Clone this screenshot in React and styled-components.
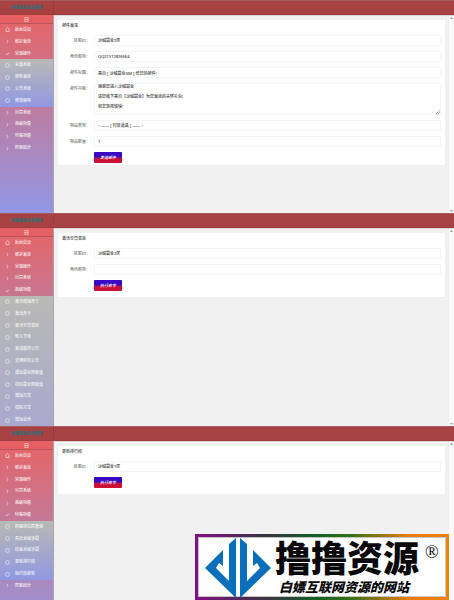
import React, { useEffect, useId, useRef } from "react";
import styled, { createGlobalStyle } from "styled-components";

const Global = createGlobalStyle`
  * { box-sizing: border-box; }
  body {
    margin: 0;
    background: #f1f1f1;
    font-family: "Noto Sans", "Noto Sans CJK SC", sans-serif;
    font-size: 4px;
    line-height: 8px;
  }
  button, input, select, textarea { font: inherit; }
`;

const Page = styled.div`
  position: relative;
  height: 100vh;
  overflow: hidden;
`;

const Screen = styled.section`
  height: 213px;
  display: grid;
  grid-template: 15px minmax(0, 1fr) / 54px minmax(0, 1fr);
  overflow: hidden;
`;

const Header = styled.header`
  grid-column: 1 / -1;
  display: grid;
  grid-template-columns: 54px 1fr;
  background: #a84242;
  border-top: 1px solid #a85d5d;
  border-bottom: 1px solid #9b3d3d;
`;

const Brand = styled.h1`
  margin: 0;
  display: flex;
  align-items: center;
  justify-content: center;
  border-right: 1px solid #94393c;
  color: #2c7076;
  font-size: 4px;
  font-weight: 900;
`;

const Sidebar = styled.aside`
  display: grid;
  grid-template-rows: 9px minmax(0, 1fr);
  border-right: 1px solid #aaa3ad;
  background: linear-gradient(#e66465, #9198e5);
  min-height: 0;
`;

const Collapse = styled.button`
  display: flex;
  align-items: center;
  justify-content: center;
  padding: 0;
  border: 0;
  border-bottom: 1px solid #b5565c;
  background: #e66063;
  color: #f4c8c8;
`;

const Menu = styled.nav`
  height: 100%;
  min-height: 0;
  display: flex;
  flex-direction: column;
`;

const Group = styled.div`
  flex: 0 0 calc(100% * ${(p) => p.$rows} / 16);
  display: grid;
  grid-auto-rows: minmax(0, 1fr);
  background: ${(p) => (p.$sub ? `linear-gradient(#b9b9b5, ${p.$end})` : "transparent")};
`;

const MenuLink = styled.a`
  display: grid;
  grid-template-columns: 5px 1fr;
  column-gap: 5px;
  align-items: center;
  padding-left: 5px;
  color: #fff;
  font-weight: 500;
  text-decoration: none;
  white-space: nowrap;
  opacity: 0.9;
`;

const Main = styled.main`
  display: grid;
  grid-template-columns: minmax(0, 1fr) 5px;
  column-gap: 4px;
  padding-left: 4px;
  background: #f1f1f1;
  border-top: 1px solid #ddd9d9;
`;

const ScrollTrack = styled.div`
  display: flex;
  flex-direction: column;
  justify-content: space-between;
  align-items: center;
  padding: 1px 0;
  background: #fafafa;
  color: #999;
`;

const Card = styled.form`
  align-self: start;
  margin-top: 4px;
  padding: 2px 4px ${(p) => (p.$tight ? 2 : 6)}px;
  background: #fff;
  border-radius: 1px;
`;

const Title = styled.h2`
  margin: 0 0 5px;
  font-size: 4px;
  line-height: 8px;
  font-weight: 500;
  color: #333;
`;

const Fields = styled.div`
  display: grid;
  row-gap: 5px;
`;

const Field = styled.div`
  display: grid;
  grid-template-columns: 28px minmax(0, 1fr);
  column-gap: 4px;
`;

const Label = styled.label`
  line-height: 11px;
  text-align: right;
  white-space: nowrap;
  color: #555;
`;

const boxStyle = `
  display: block;
  width: 100%;
  height: 11px;
  margin: 0;
  padding: 0 3px;
  border: 1px solid #f5f5f5;
  border-radius: 1px;
  outline: 0;
  background: #fff;
  color: #333;
  font-weight: 500;
`;

const TextBox = styled.input`${boxStyle}`;
const Choice = styled.select`
  ${boxStyle}
  appearance: none;
`;
const Message = styled.textarea`
  ${boxStyle}
  height: 32px;
  line-height: 10px;
  resize: none;
  scrollbar-width: none;
`;
const MessageWrap = styled.div`
  position: relative;
`;
const Grip = styled.svg`
  position: absolute;
  right: 1px;
  bottom: 1px;
`;

const Submit = styled.button`
  justify-self: start;
  width: 28px;
  height: 11px;
  margin-left: 32px;
  padding: 0;
  border: 0;
  border-radius: 1px;
  background: linear-gradient(#3908c4 42%, #cb1035 62%);
  color: #fff;
  font-weight: 500;
  font-style: italic;
`;

const Banner = styled.aside`
  position: absolute;
  right: 5px;
  bottom: 0;
  width: 254px;
  height: 66px;
  padding: 3px;
  background: linear-gradient(90deg, #821087, #393442 28%, #126024 48%, #39711a 62%, #e97c0b 84%, #f18100);
`;

const BannerBody = styled.div`
  height: 100%;
  display: grid;
  grid-template-columns: 66px 146px 1fr;
  column-gap: 4px;
  padding-left: 6px;
  border: 1px solid #c9c5c2;
  background: #fff;
  color: #080808;
`;

const BannerText = styled.div`
  padding-top: 2px;
  white-space: nowrap;
  font-family: "Liberation Sans", "Noto Sans CJK SC", sans-serif;
  font-weight: 900;
`;

const BannerName = styled.strong`
  display: block;
  font-size: 36px;
  line-height: 40px;
  font-weight: 900;
`;

const Slogan = styled.span`
  display: block;
  padding-left: 4px;
  font-size: 13px;
  line-height: 15px;
  font-style: italic;
`;

const Registered = styled.span`
  padding-top: 4px;
  font-family: "Liberation Serif", serif;
  font-size: 18px;
  line-height: 20px;
`;

function MenuIcon({ kind }) {
  const paths = {
    home: "M.5 2.5 2.5.5 4.5 2.5M1 2.5V4.5H4V2.5",
    closed: "M1.5 1 3.2 2.5 1.5 4",
    open: "M.8 3 2 3.6 4.2 1.8",
  };
  return (
    <svg width="5" height="5" viewBox="0 0 5 5" fill="none" stroke="#fff" strokeWidth=".6">
      {kind === "item" ? <circle cx="2.5" cy="2.5" r="1.9" /> : <path d={paths[kind]} />}
    </svg>
  );
}

function MenuGroup({ items, sub, end = "#9198e2", open }) {
  return (
    <Group $rows={items.length} $sub={sub} $end={end}>
      {items.map((name) => (
        <MenuLink href="#" key={name}>
          <MenuIcon kind={sub ? "item" : name === "后台首页" ? "home" : name === open ? "open" : "closed"} />
          {name}
        </MenuLink>
      ))}
    </Group>
  );
}

function Console({ menu, title, tight, action, children }) {
  return (
    <Screen>
      <Header><Brand>沙城霸业后台管理</Brand></Header>
      <Sidebar>
        <Collapse aria-label="菜单" type="button">
          <svg width="5" height="5" viewBox="0 0 5 5" stroke="currentColor" fill="none">
            <path d="M.5.5H4.5M.5 2.5H4.5M.5 4.5H4.5M1 .5V4.5M4 .5V4.5" strokeWidth=".7" />
          </svg>
        </Collapse>
        <Menu>{menu}</Menu>
      </Sidebar>
      <Main>
        <Card $tight={tight} onSubmit={(e) => e.preventDefault()}>
          <Title>{title}</Title>
          <Fields>
            {children}
            <Submit>{action}</Submit>
          </Fields>
        </Card>
        <ScrollTrack>
          <svg width="3" height="2" viewBox="0 0 3 2"><path d="M0 2 1.5 0 3 2Z" fill="currentColor" /></svg>
          <svg width="3" height="2" viewBox="0 0 3 2"><path d="M0 0 1.5 2 3 0Z" fill="currentColor" /></svg>
        </ScrollTrack>
      </Main>
    </Screen>
  );
}

function InputField({ label, value = "" }) {
  const id = useId();
  return (
    <Field>
      <Label htmlFor={id}>{label}：</Label>
      <TextBox id={id} defaultValue={value} />
    </Field>
  );
}

function SelectField({ label, value }) {
  const id = useId();
  return (
    <Field>
      <Label htmlFor={id}>{label}：</Label>
      <Choice id={id}><option>{value}</option></Choice>
    </Field>
  );
}

function MessageField({ label, value }) {
  const id = useId();
  const ref = useRef(null);
  useEffect(() => { ref.current.scrollTop = 2; }, []);
  return (
    <Field>
      <Label htmlFor={id}>{label}：</Label>
      <MessageWrap>
        <Message id={id} ref={ref} defaultValue={value} />
        <Grip width="4" height="4" viewBox="0 0 4 4" stroke="#777" strokeWidth=".6">
          <path d="M0 4 4 0M2 4 4 2" />
        </Grip>
      </MessageWrap>
    </Field>
  );
}

function BannerLogo() {
  return (
    <svg width="66" height="60" viewBox="0 0 66 60" fill="#096fba">
      <path d="M31 0 24 6V43L11 30 14 25 18 28V12L0 30 31 60Z" />
      <path d="M35 0 42 6V43L55 30 52 25 48 28V12L66 30 35 60Z" />
    </svg>
  );
}

export default function App() {
  return (
    <>
      <Global />
      <Page>
        <Console
          title="邮件发送"
          action="发送邮件"
          tight
          menu={
            <>
              <MenuGroup items={["后台首页", "维护发放", "常规操作"]} open="常规操作" />
              <MenuGroup sub items={["充值系统", "邮件发放", "公告系统", "修改昵称"]} />
              <MenuGroup items={["封禁系统", "高级功能", "特殊功能", "区服统计"]} />
            </>
          }
        >
          <SelectField label="区服ID" value="沙城霸业2区" />
          <InputField label="角色昵称" value="QQ21312826664" />
          <InputField label="邮件标题" value="来自 [ 沙城霸业GM ] 给您的邮件!" />
          <MessageField label="邮件内容" value={"感谢您进入沙城霸业\n请您收下来自【沙城霸业】为您发放的关怀礼包!\n祝您游戏愉快!\n"} />
          <SelectField label="物品类型" value="< —— [ 时装道具 ] —— >" />
          <InputField label="物品数量" value="1" />
        </Console>

        <Console
          title="激活至尊贵族"
          action="执行命令"
          menu={
            <>
              <MenuGroup items={["后台首页", "维护发放", "常规操作", "封禁系统", "高级功能"]} open="高级功能" />
              <MenuGroup
                sub
                end="#a9a9cf"
                items={["激活增强月卡", "激活月卡", "激活至尊贵族", "踢人下线", "发送循环公告", "清理所有公告", "增加霸业回收值", "扣除霸业回收值", "增加元宝", "扣除元宝", "增加金币"]}
              />
            </>
          }
        >
          <SelectField label="区服ID" value="沙城霸业2区" />
          <InputField label="角色昵称" />
        </Console>

        <Console
          title="更新排行榜"
          action="执行命令"
          menu={
            <>
              <MenuGroup items={["后台首页", "维护发放", "常规操作", "封禁系统", "高级功能", "特殊功能"]} open="特殊功能" />
              <MenuGroup sub items={["跨服排位匹查询", "开启龙城争霸", "结束龙城争霸", "更新排行榜", "执行热更新"]} />
              <MenuGroup items={["区服统计"]} />
            </>
          }
        >
          <SelectField label="区服ID" value="沙城霸业1区" />
        </Console>

        <Banner>
          <BannerBody>
            <BannerLogo />
            <BannerText>
              <BannerName>撸撸资源</BannerName>
              <Slogan>白嫖互联网资源的网站</Slogan>
            </BannerText>
            <Registered>®</Registered>
          </BannerBody>
        </Banner>
      </Page>
    </>
  );
}
